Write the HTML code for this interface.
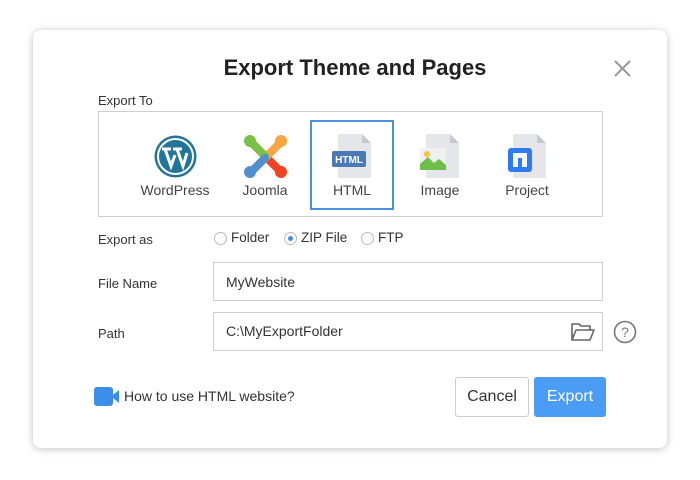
<!DOCTYPE html>
<html><head><style>
*{margin:0;padding:0;box-sizing:border-box}
body{width:700px;height:480px;background:#fff;font-family:"Liberation Sans",sans-serif;position:relative;overflow:hidden;color:#333}
.dlg{position:absolute;left:33px;top:30px;width:634px;height:418px;background:#fff;border-radius:8px;box-shadow:0 1px 8px rgba(0,0,0,.25)}
.a{position:absolute}
.t{font-size:14px;color:#333}
.box{position:absolute;border:1px solid #cfcfcf;background:#fff}
.lbl{position:absolute;font-size:14px;color:#444;text-align:center;width:90px}
.radio{position:absolute;width:13px;height:13px;border:1px solid #bbb;border-radius:50%;background:#fff}
</style></head><body>
<div class="dlg"></div>
<div class="a" style="left:0;width:710px;top:55px;text-align:center;font-size:22px;font-weight:bold;color:#222">Export Theme and Pages</div>
<svg class="a" style="left:614px;top:60px" width="17" height="17"><path d="M1 1L16 16M16 1L1 16" stroke="#999" stroke-width="2"/></svg>
<div class="a t" style="left:98px;top:93px;font-size:13px">Export To</div>
<div class="box" style="left:98px;top:111px;width:505px;height:106px"></div>
<div class="a" style="left:310px;top:120px;width:84px;height:90px;border:2px solid #4a90e2"></div>
<svg class="a" style="left:153px;top:134px" width="45" height="45" viewBox="0 0 45 45"><circle cx="22.5" cy="22.5" r="21" fill="#21759b"/><circle cx="22.5" cy="22.5" r="17.5" fill="none" stroke="#fff" stroke-width="2"/><path d="M9 15h9M12 15l6 17 4-11M20 15h9M24 15l6 17 4-13" stroke="#fff" stroke-width="3" fill="none"/></svg>
<div class="lbl" style="left:130px;top:182px">WordPress</div>
<svg class="a" style="left:243px;top:134px" width="45" height="45" viewBox="0 0 45 45"><path d="M10 10L36 36" stroke="#f44321" stroke-width="8" stroke-linecap="round"/><path d="M36 10L10 36" stroke="#f9a541" stroke-width="8" stroke-linecap="round"/><path d="M10 10L22 22" stroke="#7ac143" stroke-width="8" stroke-linecap="round"/><path d="M10 36L22 24" stroke="#5091cd" stroke-width="8" stroke-linecap="round"/><circle cx="7" cy="7" r="6" fill="#7ac143"/><circle cx="38" cy="7" r="6" fill="#f9a541"/><circle cx="7" cy="38" r="6" fill="#5091cd"/><circle cx="38" cy="38" r="6" fill="#f44321"/></svg>
<div class="lbl" style="left:220px;top:182px">Joomla</div>
<svg class="a" style="left:332px;top:134px" width="40" height="44" viewBox="0 0 40 44"><path d="M6 0h24l9 9v35H6z" fill="#e4e6ea"/><path d="M30 0v9h9z" fill="#c6c9ce"/><rect x="0" y="17" width="34" height="16" rx="2" fill="#4a7ab5"/><text x="17" y="29" font-size="10" font-weight="bold" fill="#fff" text-anchor="middle" font-family="Liberation Sans">HTML</text></svg>
<div class="lbl" style="left:307px;top:182px">HTML</div>
<svg class="a" style="left:420px;top:134px" width="40" height="44" viewBox="0 0 40 44"><path d="M6 0h24l9 9v35H6z" fill="#e4e6ea"/><path d="M30 0v9h9z" fill="#c6c9ce"/><rect x="0" y="14" width="26" height="22" rx="2" fill="#f0f0f0"/><circle cx="7" cy="20" r="3" fill="#f5c338"/><path d="M0 36V30l8-7 6 6 5-4 7 6v5z" fill="#6cbf4b"/></svg>
<div class="lbl" style="left:395px;top:182px">Image</div>
<svg class="a" style="left:507px;top:134px" width="40" height="44" viewBox="0 0 40 44"><path d="M6 0h24l9 9v35H6z" fill="#e4e6ea"/><path d="M30 0v9h9z" fill="#c6c9ce"/><rect x="1" y="14" width="24" height="24" rx="3" fill="#2f7bf5"/><path d="M6 33V19h14v14h-5V24h-4v9z" fill="#fff"/></svg>
<div class="lbl" style="left:482px;top:182px">Project</div>

<div class="a t" style="left:98px;top:232px;font-size:13px">Export as</div>
<div class="radio" style="left:214px;top:232px"></div><div class="a t" style="left:231px;top:230px;font-size:13.5px">Folder</div>
<div class="radio" style="left:284px;top:232px"></div><div class="a" style="left:288px;top:236px;width:5px;height:5px;border-radius:50%;background:#3b8eea"></div><div class="a t" style="left:301px;top:230px;font-size:13.5px">ZIP File</div>
<div class="radio" style="left:361px;top:232px"></div><div class="a t" style="left:378px;top:230px;font-size:13.5px">FTP</div>

<div class="a t" style="left:98px;top:276px;font-size:13px">File Name</div>
<div class="box" style="left:213px;top:262px;width:390px;height:39px"></div>
<div class="a t" style="left:226px;top:274px">MyWebsite</div>
<div class="a t" style="left:98px;top:326px;font-size:13px">Path</div>
<div class="box" style="left:213px;top:312px;width:390px;height:39px"></div>
<div class="a t" style="left:226px;top:323px">C:\MyExportFolder</div>
<svg class="a" style="left:571px;top:322px" width="24" height="20" viewBox="0 0 24 20"><path d="M1 18V2h7l2 2h9v4M1 18l4-10h18l-4 10z" fill="none" stroke="#666" stroke-width="1.6" stroke-linejoin="round"/></svg>
<svg class="a" style="left:613px;top:320px" width="24" height="24" viewBox="0 0 24 24"><circle cx="12" cy="12" r="10.5" fill="none" stroke="#777" stroke-width="1.6"/><text x="12" y="17" font-size="14" text-anchor="middle" fill="#777" font-family="Liberation Sans">?</text></svg>

<svg class="a" style="left:94px;top:387px" width="26" height="19" viewBox="0 0 26 19"><rect x="0" y="0" width="19" height="19" rx="3" fill="#3b8eea"/><path d="M17 9.5L25 3v13z" fill="#3b8eea"/></svg>
<div class="a t" style="left:124px;top:388px">How to use HTML website?</div>
<div class="a" style="left:455px;top:377px;width:74px;height:40px;border:1px solid #ccc;border-radius:3px;font-size:16px;text-align:center;line-height:38px;color:#333">Cancel</div>
<div class="a" style="left:534px;top:377px;width:72px;height:40px;background:#4a9cf5;border-radius:3px;font-size:16px;text-align:center;line-height:40px;color:#fff">Export</div>
</body></html>
